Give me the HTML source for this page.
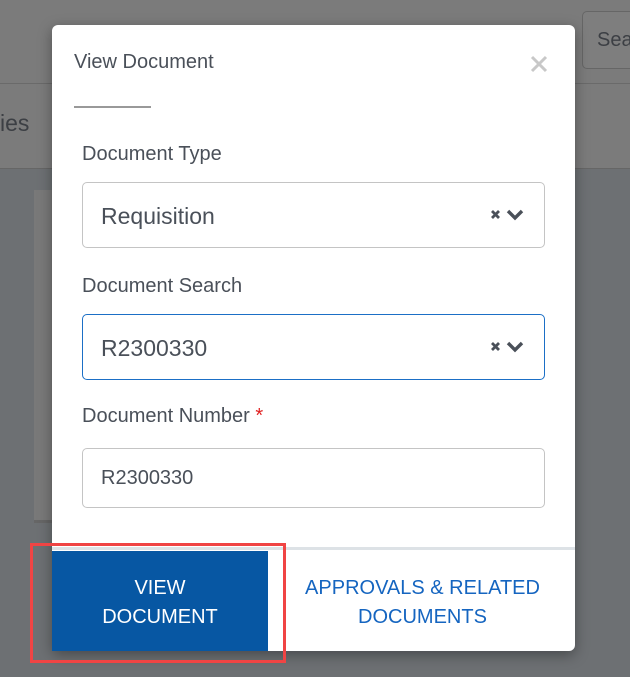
<!DOCTYPE html>
<html><head><style>
body{margin:0;width:630px;height:677px;overflow:hidden;background:#6d7073;font-family:"Liberation Sans",sans-serif;position:relative}
.a{position:absolute}
label{position:absolute;left:82px;font-size:20px;color:#4a5059}
.in{position:absolute;left:82px;width:463px;border:1px solid #c4c4c4;border-radius:5px;background:#fff;box-sizing:border-box}
.in span{position:absolute;left:18px;color:#4a5059}
.in svg{position:absolute;left:406px;top:24px}
</style></head><body>
<div class="a" style="left:0;top:0;width:630px;height:83px;background:#7b7b7b"></div>
<div class="a" style="left:0;top:83px;width:630px;height:1px;background:#6a6a6a"></div>
<div class="a" style="left:0;top:84px;width:630px;height:84px;background:#7b7b7b"></div>
<div class="a" style="left:0;top:168px;width:630px;height:1px;background:#666"></div>
<div class="a" style="left:0;top:110px;font-size:23px;color:#3c3f44">ies</div>
<div class="a" style="left:582px;top:11px;width:60px;height:58px;border:1px solid #666;border-radius:5px;background:#7e7e7e;box-sizing:border-box"></div>
<div class="a" style="left:597px;top:29px;font-size:20px;color:#3c3f44">Sea</div>
<div class="a" style="left:34px;top:190px;width:20px;height:330px;background:#797979;border-bottom:3px solid #666"></div>
<div class="a" style="left:52px;top:25px;width:523px;height:626px;background:#fff;border-radius:6px;box-shadow:0 4px 14px rgba(0,0,0,.35)"></div>
<div class="a" style="left:74px;top:51px;font-size:20px;color:#4a5059">View Document</div>
<svg class="a" style="left:530px;top:55px" width="18" height="18"><path d="M2 2L16 16M16 2L2 16" stroke="#c8c8c8" stroke-width="3"/></svg>
<div class="a" style="left:74px;top:106px;width:77px;height:2px;background:#999"></div>
<label style="top:143px">Document Type</label>
<div class="in" style="top:182px;height:66px"><span style="top:20px;font-size:23px">Requisition</span><svg width="38" height="16"><path d="M3 4L10 11M10 4L3 11" stroke="#4a5059" stroke-width="2.8"/><path d="M19 4L26 11L33 4" stroke="#4a5059" stroke-width="3.4" fill="none"/></svg></div>
<label style="top:275px">Document Search</label>
<div class="in" style="top:314px;height:66px;border-color:#1b6fc6"><span style="top:20px;font-size:23px">R2300330</span><svg width="38" height="16"><path d="M3 4L10 11M10 4L3 11" stroke="#4a5059" stroke-width="2.8"/><path d="M19 4L26 11L33 4" stroke="#4a5059" stroke-width="3.4" fill="none"/></svg></div>
<label style="top:405px">Document Number <b style="color:#e02020;font-weight:normal">*</b></label>
<div class="in" style="top:448px;height:60px"><span style="top:18px;font-size:20px">R2300330</span></div>
<div class="a" style="left:52px;top:547px;width:523px;height:3px;background:#dde2e6"></div>
<div class="a" style="left:52px;top:551px;width:216px;height:100px;background:#0757a3;color:#fff;font-size:20px;text-align:center;line-height:29px;padding-top:23px;box-sizing:border-box">VIEW<br>DOCUMENT</div>
<div class="a" style="left:270px;top:551px;width:305px;height:100px;color:#1565c0;font-size:20px;text-align:center;line-height:29px;padding-top:23px;box-sizing:border-box">APPROVALS &amp; RELATED<br>DOCUMENTS</div>
<div class="a" style="left:30px;top:543px;width:256px;height:120px;border:3px solid #f04444;box-sizing:border-box"></div>
</body></html>
